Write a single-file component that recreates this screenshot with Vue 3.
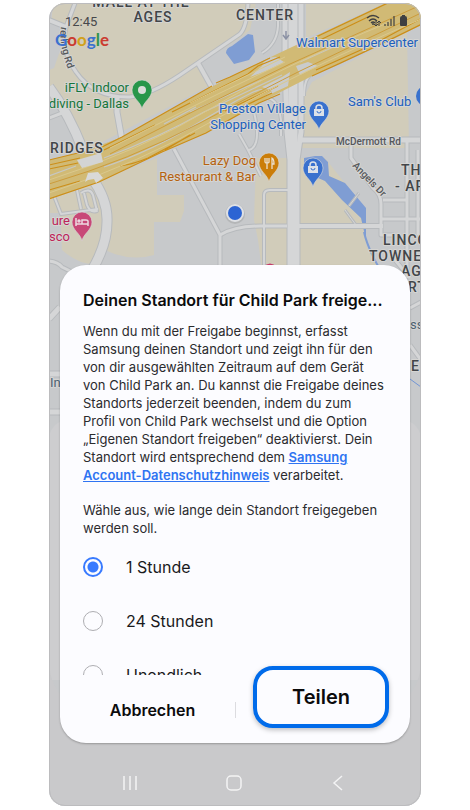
<template>
  <main class="page">
    <div class="phone">
      <svg class="map" viewBox="49 3 372 803" preserveAspectRatio="xMidYMin slice" aria-hidden="true">
        <rect x="49" y="3" width="372" height="803" fill="#c7c9cb" />

        <!-- land -->
        <g fill="#d1ccba">
          <path d="M53 3H256L250 30L240 38L198 64L212 84L110 138L82 152L68 115L49 85V50Z" />
          <path d="M306 3H385L306 38Z" />
          <path d="M312 82L407 32L409 148H302V100Z" />
          <path d="M49 190L120 172L157 158V195H184V211L180 222H154V255Q130 262 105 250L98 264Q80 266 62 250L60 213H49Z" />
          <path d="M256 158H288V270H262L258 240L254 220Z" />
          <path d="M300 158H325L366 210V245L380 270H298Z" />
        </g>
        <path d="M49 20L66 28L62 45L54 68L49 70Z" fill="#c7c9cb" />
        <path d="M226 53Q226 48 232 46L248 34L253 35L255 52L249 60L234 64Z" fill="#7f9dd3" />
        <path d="M304 158L315 156L322 156L328 162L329 176L345 183L366 208V228L366 240L361 218L342 200L325 181L304 172Z" fill="#7f9dd3" />
        <path d="M364 232Q367 246 378 266" fill="none" stroke="#7f9dd3" stroke-width="2" />

        <!-- streets, casing first and surface over it -->
        <g v-for="layer in streetLayers" :key="layer.color" fill="none" :stroke="layer.color" stroke-linejoin="round">
          <path v-for="street in streets" :key="street.d" :d="street.d" :stroke-width="street.w + layer.extra" />
        </g>

        <!-- highway -->
        <path d="M49 160L82 152L122 137L175 107L230 77L275 55L390 1H425V23L312 76L259 103L206 133L162 152L99 182L49 199Z" fill="#d1ba75" />
        <g fill="#c9cbcc">
          <path d="M262 87L282 77L290 72L288 86L262 98L272 91Z" />
          <path d="M262 66Q264 57 276 57L284 62L266 71L250 77Z" />
          <path d="M296 66L308 62L318 66L300 75Z" />
        </g>
        <g fill="none" stroke="#cc8e18" stroke-width="1.2">
          <path d="M49 160L82 152M102 147L122 137L175 107L212 86M216 83L230 77L270 58" />
          <path d="M49 199L99 182L162 152L206 133L259 103L280 94" />
          <path d="M316 37L390 2M318 41L372 15M312 76Q370 50 424 23M316 70L372 45L424 17" />
          <path d="M49 165L80 158M49 169L78 163M104 150L155 125M49 190L80 181" />
          <path d="M120 166Q134 164 148 158L195 133M165 150L190 135" />
          <path d="M172 112L248 74L258 66L280 57M225 111L278 86M240 108L272 93" />
        </g>
        <g fill="none" stroke="#c6c7c4" stroke-width="1.2">
          <path d="M104 167Q150 152 205 119T262 90" />
          <path d="M49 176L76 166M104 158Q160 137 204 112L282 75" />
          <path d="M164 124L196 107M190 112L262 80M300 62L340 44" />
        </g>
        <g fill="none" stroke="#dac88d">
          <path d="M49 180Q140 151 210 109T390 22" />
          <path d="M49 193Q140 163 218 118T421 19" />
          <path d="M110 148L220 93L285 62M190 103L285 57" />
        </g>
        <g fill="none" stroke="#cc9c3c">
          <path d="M49 184Q130 160 200 123T300 71L421 13" />
          <path d="M110 154L200 108L290 64L421 5" />
        </g>
        <path d="M77 160L101 153L103 162L82 168Z" fill="#d3d4d4" />
        <path d="M85 182L88 173L98 172L103 178L96 183L94 179L88 180Z" fill="#d9d9d9" />
        <path d="M286 31V38M283 35L286 39L289 35" fill="none" stroke="#8b91a4" stroke-width="1.5" />

        <!-- places -->
        <path id="sterling" d="M61 27Q57 46 75 86" fill="none" />
        <g class="labels">
          <g class="area">
            <text x="141" y="7" text-anchor="middle">MALL AT THE</text>
            <text x="153" y="22" text-anchor="middle">AGES</text>
            <text x="265" y="20" text-anchor="middle">CENTER</text>
            <text x="50" y="153">RIDGES</text>
            <text x="401" y="175">TH</text>
            <text x="395" y="191">- AP</text>
            <text x="383" y="245">LINCO</text>
            <text x="369" y="261">TOWNE</text>
            <text x="401" y="276">AGE</text>
            <text x="408" y="292">RT</text>
            <text x="411" y="371">E</text>
          </g>
          <g class="street">
            <text x="336" y="145">McDermott Rd</text>
            <text transform="translate(352 166) rotate(46)">Angels Dr</text>
            <text><textPath href="#sterling">rerling Rd</textPath></text>
          </g>
          <g class="poi" fill="#17753a">
            <text x="129" y="92" text-anchor="end">iFLY Indoor</text>
            <text x="129" y="108" text-anchor="end">diving - Dallas</text>
          </g>
          <g class="poi" fill="#205fbd">
            <text x="296" y="47">Walmart Supercenter</text>
            <text x="348" y="106">Sam's Club</text>
            <text x="306" y="113" text-anchor="end">Preston Village</text>
            <text x="306" y="129" text-anchor="end">Shopping Center</text>
          </g>
          <g class="poi" fill="#b5620f">
            <text x="256" y="165" text-anchor="end">Lazy Dog</text>
            <text x="256" y="181" text-anchor="end">Restaurant &amp; Bar</text>
          </g>
          <g class="poi" fill="#bd2459">
            <text x="70" y="225" text-anchor="end">ure</text>
            <text x="70" y="241" text-anchor="end">sco</text>
          </g>
          <g class="poi" fill="#4d6272">
            <text x="50" y="387">In</text>
            <text x="410" y="329">ss</text>
          </g>
        </g>

        <!-- pins -->
        <g v-for="pin in pins" :key="pin.x" :transform="`translate(${pin.x} ${pin.y})`">
          <path d="M0 19C-1 12 -10 8 -10 0A10 10 0 0 1 10 0C10 8 1 12 0 19Z" :fill="pin.color" stroke="#d8d8d8" stroke-width="0.6" />
          <circle v-if="pin.kind === 'dot'" r="4" fill="#d9dcd9" />
          <g v-if="pin.kind === 'bag'">
            <path d="M-5 -2H5V5H-5Z" fill="#dce1e8" />
            <path d="M-3 -1V-3A3 3 0 0 1 3 -3V-1" fill="none" stroke="#dce1e8" stroke-width="1.5" />
            <path d="M-2 0A2 2 0 0 0 2 0" fill="none" stroke="#3971ce" />
          </g>
          <g v-if="pin.kind === 'food'" fill="none" stroke="#eadfcf" stroke-width="1.3">
            <path d="M-4 -5V-1Q-4 0 -2 0T0 -1V-5M-2 -5V6M3 6V-5Q5 -4 5 1H3" />
          </g>
          <g v-if="pin.kind === 'bed'" fill="none" stroke="#edd9e1" stroke-width="1.5">
            <path d="M-6 -4V4M-6 2H6M6 4V-1Q6 -2 4 -2H0V2" />
            <circle cx="-3" cy="-1" r="1" />
          </g>
        </g>
        <circle cx="426" cy="96" r="10" fill="#3971ce" />
        <path d="M263 267Q270 260 277 267Z" fill="#c63c6c" />
        <circle cx="235" cy="214" r="10" fill="#00000018" />
        <circle cx="235" cy="213" r="9" fill="#dfe1e5" />
        <circle cx="235" cy="213" r="7" fill="#2c64d3" />

        <!-- sheet behind the dialog -->
        <path d="M410 379L421 387" stroke="#7195d5" />
        <path d="M49 436Q53 422 66 420H404Q417 422 421 436V680H49Z" fill="#cdcdcf" />
        <path d="M49 664Q51 688 66 700H404Q419 688 421 664V806H49Z" fill="#c9c9cb" />
      </svg>

      <header class="status">
        <div class="status-row">
          <span class="clock">12:45</span>
          <svg class="status-icons" width="42" height="16" viewBox="0 0 42 16" aria-hidden="true">
            <g fill="none" stroke="#3f4042" stroke-width="1.4">
              <path d="M1 5Q7 0 13 5M3 8Q7 4 11 8M5 10Q7 8 9 10" />
              <path d="M10 8V13M8 11L10 13L12 11M13 13V8M11 10L13 8L15 10" stroke-width="1" />
              <path d="M19 13V11M22 13V9M25 13V6M28 13V3" stroke-width="1.2" />
            </g>
            <circle cx="7" cy="11" r="1" fill="#3f4042" />
            <path d="M36 2H39V3Q41 3 41 5V12Q41 13 40 13H35Q34 13 34 12V5Q34 3 36 3Z" fill="#3f4042" />
          </svg>
        </div>
        <div class="google">
          <span class="blue">G</span><span class="red">o</span><span class="yellow">o</span><span class="blue">g</span><span class="green">l</span><span class="red">e</span>
        </div>
      </header>

      <section class="dialog" role="dialog" aria-labelledby="dialog-title">
        <div class="content">
          <h1 id="dialog-title">Deinen Standort für Child Park freige...</h1>
          <p>
            Wenn du mit der Freigabe beginnst, erfasst<br />
            Samsung deinen Standort und zeigt ihn für den<br />
            von dir ausgewählten Zeitraum auf dem Gerät<br />
            von Child Park an. Du kannst die Freigabe deines<br />
            Standorts jederzeit beenden, indem du zum<br />
            Profil von Child Park wechselst und die Option<br />
            „Eigenen Standort freigeben“ deaktivierst. Dein<br />
            Standort wird entsprechend dem <a href="#">Samsung<br />
            Account-Datenschutzhinweis</a> verarbeitet.
          </p>
          <p>
            Wähle aus, wie lange dein Standort freigegeben<br />
            werden soll.
          </p>
          <div class="options">
            <label v-for="option in options" :key="option" class="option">
              <input v-model="duration" type="radio" name="duration" :value="option" />
              <span>{{ option }}</span>
            </label>
          </div>
        </div>
        <footer class="actions">
          <button type="button" class="cancel">Abbrechen</button>
          <span class="divider"></span>
          <button type="button" class="share">Teilen</button>
        </footer>
      </section>

      <nav class="navbar">
        <button type="button" aria-label="Letzte Apps">
          <svg width="18" height="18" viewBox="0 0 18 18"><path d="M3 2V16M9 2V16M15 2V16" /></svg>
        </button>
        <button type="button" aria-label="Startseite">
          <svg width="18" height="18" viewBox="0 0 18 18"><rect x="2" y="2" width="14" height="14" rx="4" /></svg>
        </button>
        <button type="button" aria-label="Zurück">
          <svg width="18" height="18" viewBox="0 0 18 18"><path d="M13 2L5 9L13 16" /></svg>
        </button>
      </nav>
    </div>
  </main>
</template>

<script setup>
import { ref } from "vue";

const options = ["1 Stunde", "24 Stunden", "Unendlich"];
const duration = ref("1 Stunde");

const streetLayers = [
  { color: "#b7babd", extra: 2 },
  { color: "#d5d6d7", extra: 0 },
];

const streets = [
  { d: "M75 3L66 27Q60 50 76 72Q94 98 130 97Q150 95 180 75L240 34Q247 27 248 3", w: 3 },
  { d: "M49 20L66 27", w: 4 },
  { d: "M117 97V112L122 140", w: 5 },
  { d: "M198 63L212 88", w: 4 },
  { d: "M49 87Q68 112 83 150L90 175", w: 9 },
  { d: "M49 118L62 113", w: 3 },
  { d: "M92 178Q108 200 107 222Q107 245 92 270", w: 9 },
  { d: "M54 196L61 214L98 209M77 190L81 209M81 193Q90 187 93 195L97 211Q90 213 87 205L84 193", w: 2 },
  { d: "M49 261Q58 262 62 267L72 272", w: 3 },
  { d: "M174 149L220 235V270", w: 3 },
  { d: "M220 235Q235 226 260 226H287", w: 3 },
  { d: "M239 134L248 150L261 176M254 112Q262 146 249 150", w: 2 },
  { d: "M264 270V195Q264 190 270 190H288", w: 2 },
  { d: "M285 3V60L287 132L290 160V275M301 3V132L297 160V275", w: 5 },
  { d: "M293 3V275", w: 9 },
  { d: "M278 3V26Q277 44 262 53M262 98Q278 95 281 120V136M314 73Q304 76 304 96", w: 2 },
  { d: "M302 140H421", w: 5 },
  { d: "M298 226H383", w: 4 },
  { d: "M351 142V158L373 188Q381 194 381 204V235H394", w: 3 },
  { d: "M383 200H407M381 219H421M407 142V278", w: 3 },
  { d: "M349 206L359 193M345 210L356 225", w: 1 },
  { d: "M418 150V235M395 260L410 278", w: 3 },
  { d: "M49 319L60 307M49 374H60M49 412H60", w: 5 },
  { d: "M410 308L421 302M410 345L421 360", w: 3 },
];

const pins = [
  { x: 142, y: 90, kind: "dot", color: "#27964a" },
  { x: 319, y: 111, kind: "bag", color: "#3971ce" },
  { x: 313, y: 168, kind: "bag", color: "#3971ce" },
  { x: 269, y: 163, kind: "food", color: "#cb7d08" },
  { x: 82, y: 222, kind: "bed", color: "#c84877" },
];
</script>

<style>
body {
  background: #fff;
}
</style>

<style scoped>
.page {
  padding: 3px 49px;
}

.phone {
  position: relative;
  display: flex;
  flex-direction: column;
  overflow: hidden;
  border-radius: 16px;
  background: #c9c9cb;
  font-family: Inter, "Liberation Sans", sans-serif;
}

.phone::after {
  content: "";
  position: absolute;
  inset: 0;
  border: 1px solid #bcbcbe;
  border-radius: 16px;
  pointer-events: none;
}

.map {
  position: absolute;
  inset: 0;
  width: 100%;
  height: 100%;
  font-family: Roboto, "Liberation Sans", sans-serif;
}

.labels text {
  paint-order: stroke;
  stroke: #d5d5d3;
  stroke-width: 2px;
  stroke-linejoin: round;
}

.area {
  fill: #424549;
  font-size: 14px;
  font-weight: 500;
  letter-spacing: 1px;
}

.street {
  fill: #55585b;
  font-size: 10px;
  font-weight: 500;
}

.poi {
  font-size: 13px;
}

.status {
  position: relative;
  height: 262px;
  box-sizing: border-box;
  padding: 10px 13px 0 6px;
}

.status-row {
  display: flex;
  justify-content: space-between;
  align-items: center;
  height: 16px;
  padding-left: 10px;
}

.clock {
  color: #47484a;
  font-family: Roboto, "Liberation Sans", sans-serif;
  font-size: 13px;
}

.google {
  font-family: Lato, sans-serif;
  font-size: 17px;
  line-height: 22px;
  font-weight: 700;
}

.blue {
  color: #3b71cf;
}

.red {
  color: #cb3b31;
}

.yellow {
  color: #d1a11b;
}

.green {
  color: #31944c;
}

.dialog {
  position: relative;
  margin: 0 11px;
  border-radius: 26px;
  background: #fcfcff;
  box-shadow: 0 1px 2px #00000040;
}

.content {
  height: 410px;
  box-sizing: border-box;
  overflow: hidden;
  padding: 24px 23px 0;
}

h1 {
  margin: 0 0 11px;
  color: #0b0b0c;
  font-size: 16px;
  line-height: 22px;
  font-weight: 600;
  white-space: nowrap;
}

p {
  margin: 0 0 17px;
  color: #2b2b2e;
  font-size: 13px;
  line-height: 18px;
  white-space: nowrap;
}

a {
  color: #2f74f2;
  font-weight: 600;
}

.option {
  display: flex;
  align-items: center;
  gap: 23px;
  height: 54px;
  color: #1a1a1c;
  font-size: 16px;
}

.options {
  margin-top: -14px;
}

input {
  appearance: none;
  width: 20px;
  height: 20px;
  margin: 0;
  border: 1px solid #aeaeb2;
  border-radius: 50%;
}

input:checked {
  border: 2px solid #387aff;
  background: radial-gradient(circle, #387aff 5px, transparent 6px);
}

button {
  margin: 0;
  padding: 0;
  border: 0;
  background: none;
  color: #0b0b0c;
  font-family: inherit;
  font-weight: 600;
}

.actions {
  display: flex;
  align-items: flex-end;
  height: 68px;
  box-sizing: border-box;
  padding: 0 21px 15px 10px;
}

.cancel {
  flex: 1;
  height: 36px;
  font-size: 16px;
}

.divider {
  width: 1px;
  height: 16px;
  margin: 0 17px 10px 0;
  background: #dcdce0;
}

.share {
  width: 136px;
  height: 62px;
  border: 4px solid #006bea;
  border-radius: 20px;
  background: #fcfcff;
  box-shadow: 0 2px 5px #00000040;
  font-size: 20px;
}

.navbar {
  position: relative;
  display: flex;
  justify-content: space-between;
  padding: 31px 74px 14px 72px;
}

.navbar button {
  height: 18px;
}

.navbar svg {
  display: block;
  fill: none;
  stroke: #f3f3f4;
  stroke-width: 1.5;
}
</style>
